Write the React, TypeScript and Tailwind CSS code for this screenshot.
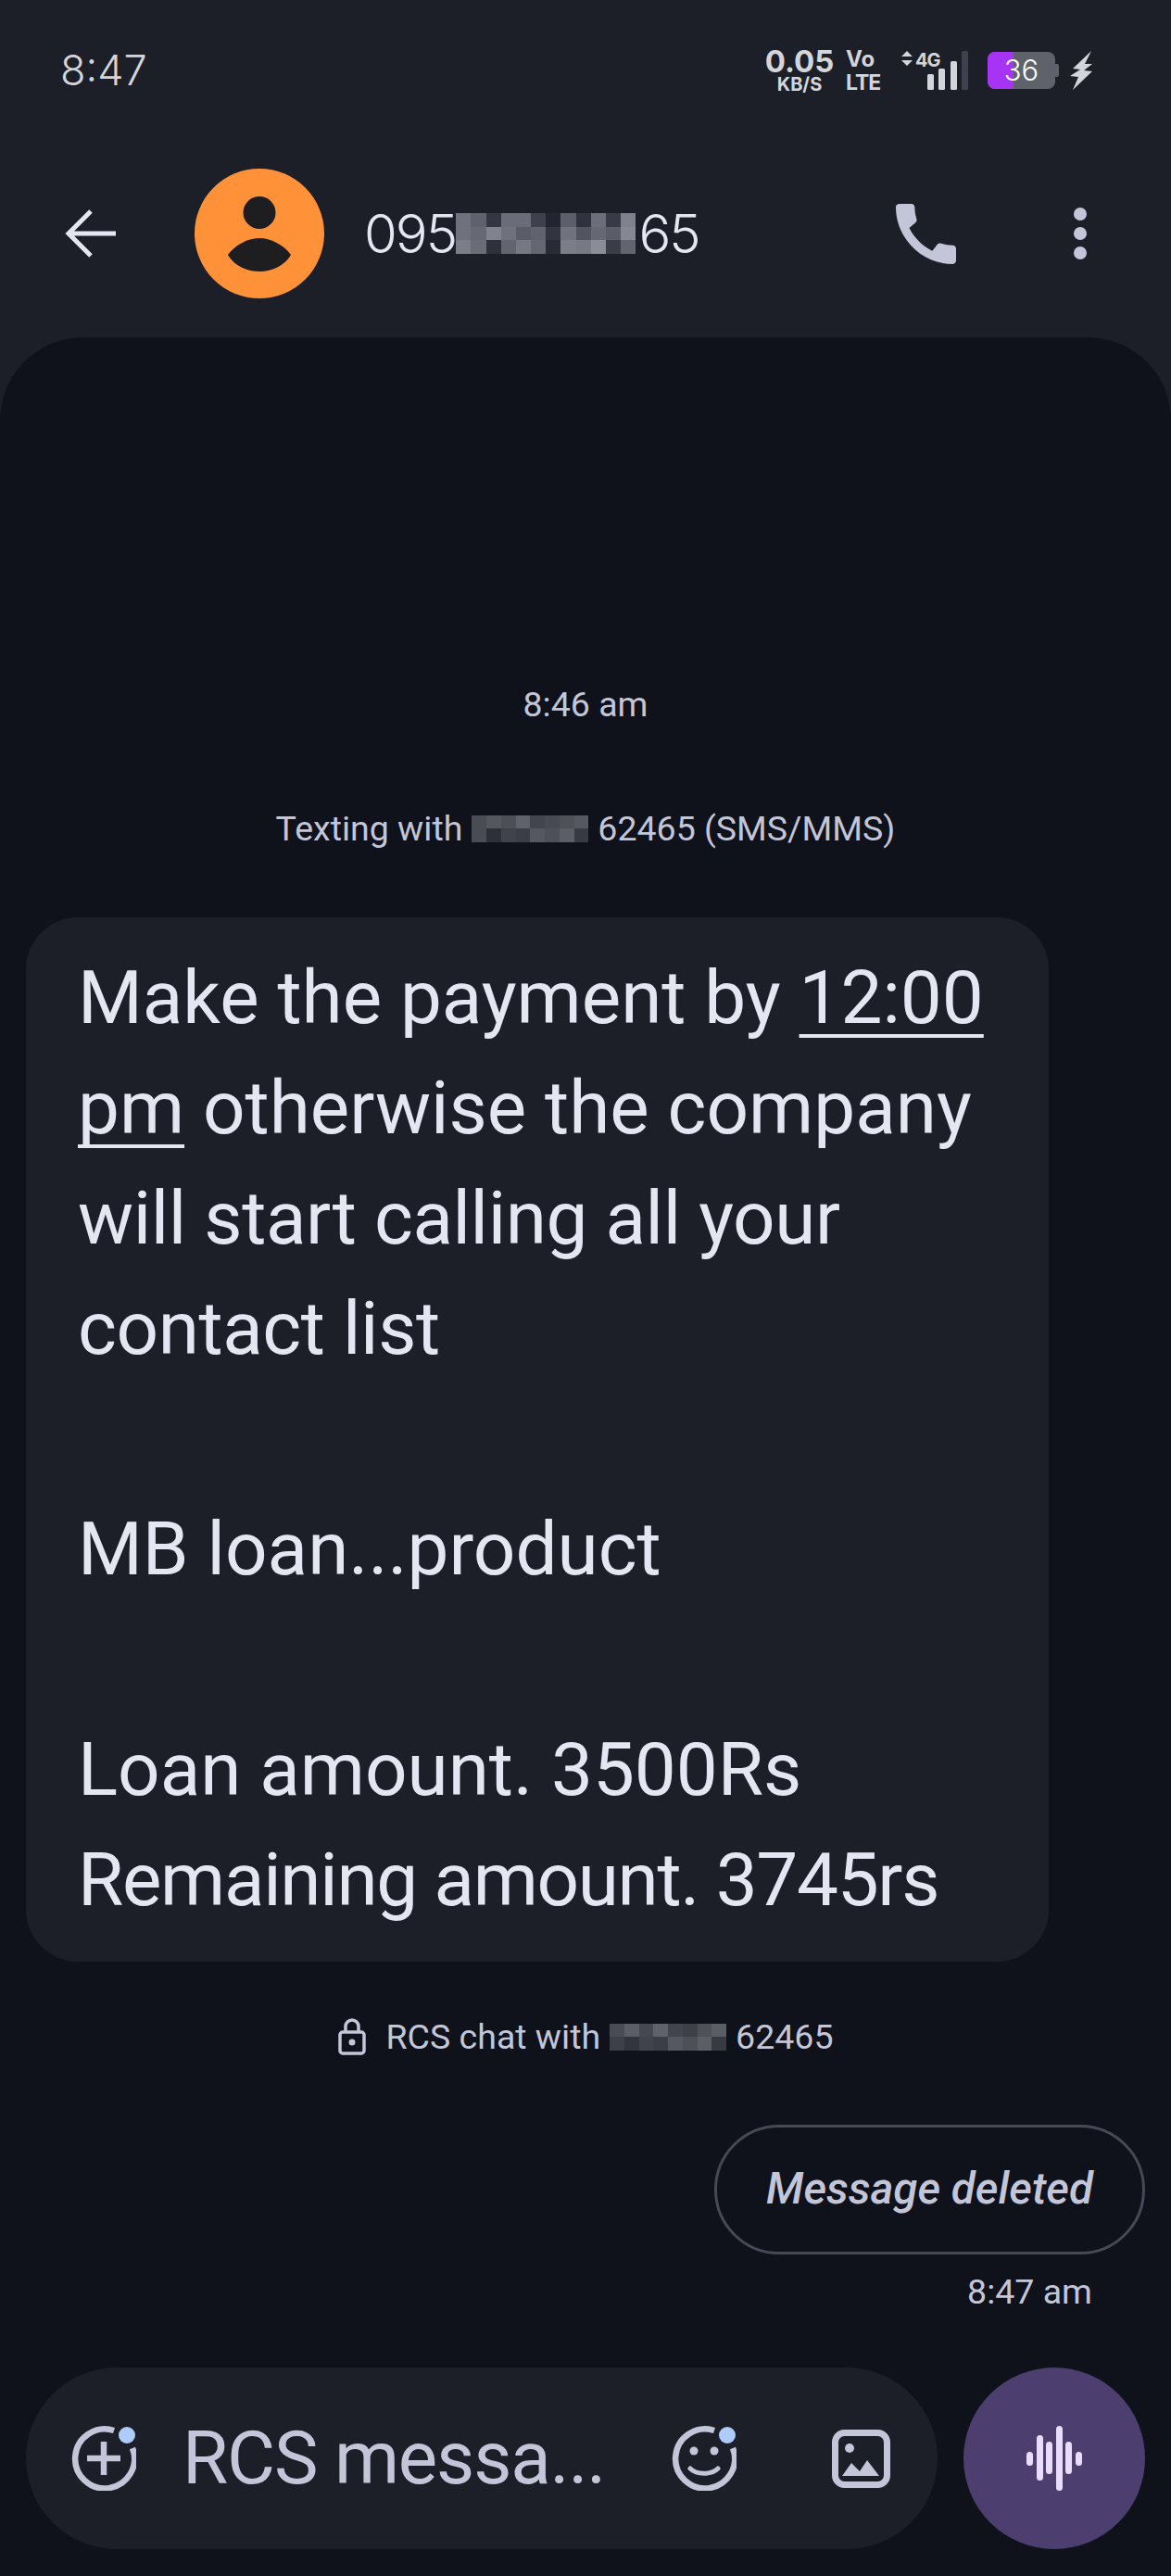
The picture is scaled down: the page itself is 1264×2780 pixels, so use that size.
import React from "react";

const nameBlocks = [
  ["#6f717c", "#5f616c", "#343641", "#6a6c77", "#6a6c77", "#3e404b", "#22242f", "#5c5e69", "#30323d", "#6c6e79", "#383a45", "#7f818c"],
  ["#6f717c", "#666873", "#80828d", "#6f717c", "#5a5c67", "#60626d", "#32343f", "#70727d", "#525460", "#666873", "#5a5c67", "#858792"],
  ["#7b7d88", "#6a6c77", "#2e303b", "#62646f", "#767883", "#646671", "#282a35", "#7b7d88", "#777984", "#8a8c96", "#3a3c47", "#62646f"],
];

const smsBlocks = [
  ["#4a4c55", "#55575f", "#4d4f58", "#60626b", "#43454e", "#484a53", "#4f5159", "#565861"],
  ["#4a4c55", "#2e3039", "#41434c", "#3c3e47", "#565861", "#4e5059", "#5c5e67", "#383a43"],
];

const rcsBlocks = [
  ["#4a4c55", "#5c5e67", "#464851", "#60626b", "#43454e", "#3e4049", "#4f5159", "#5c5e67"],
  ["#3e4049", "#33353e", "#41434c", "#3c3e47", "#565861", "#4e5059", "#5c5e67", "#383a43"],
];

function Redacted({ rows, cell, height }: { rows: string[][]; cell: number; height: number }) {
  return (
    <span className="inline-flex flex-col align-middle">
      {rows.map((row, i) => (
        <span key={i} className="flex">
          {row.map((c, j) => (
            <span key={j} style={{ background: c, width: cell, height }} />
          ))}
        </span>
      ))}
    </span>
  );
}

function StatusBar() {
  return (
    <div className="flex h-[152px] items-center justify-between pl-[65px] pr-[85px] font-['Inter',sans-serif] text-[#d3d5da]">
      <span className="text-[45px] font-light">8:47</span>
      <div className="flex items-center">
        <div className="flex w-[70px] flex-col items-center font-bold">
          <span className="text-[33px] leading-[30px]">0.05</span>
          <span className="text-[20px] leading-[20px]">KB/S</span>
        </div>
        <div className="ml-[15px] flex w-[38px] flex-col items-start font-bold">
          <span className="text-[24px] leading-[26px]">Vo</span>
          <span className="text-[23px] leading-[24px] tracking-[-1px]">LTE</span>
        </div>
        <svg width="72" height="50" viewBox="0 -8 72 50" className="ml-[22px] mt-[-8px]">
          <path d="M6 0l6 6H0zM6 16l6-6H0z" fill="#d3d5da" />
          <text x="15" y="17" fontSize="20" fontWeight="700" fill="#d3d5da" fontFamily="Inter, sans-serif" letterSpacing="-1">4G</text>
          <rect x="28" y="25" width="7" height="17" rx="1.5" fill="#d3d5da" />
          <rect x="40" y="19" width="7" height="23" rx="1.5" fill="#d3d5da" />
          <rect x="53" y="11" width="7" height="31" rx="1.5" fill="#d3d5da" />
          <rect x="65" y="0" width="7" height="42" rx="1.5" fill="#3f424c" />
        </svg>
        <div className="relative ml-[21px] flex h-[40px] w-[73px] items-center justify-center overflow-hidden rounded-[8px] bg-[#5f626a]">
          <div className="absolute inset-y-0 left-0 w-[28px] bg-[#a733f5]" />
          <span className="relative text-[31px] leading-[40px] font-light text-white">36</span>
        </div>
        <div className="h-[14px] w-[4px] rounded-r-[2px] bg-[#5f626a]" />
        <svg width="24" height="42" viewBox="0 0 24 42" className="ml-[12px]">
          <path d="M23 0 3 19l8 1L0 27l9 1-6 14 21-20-9-1 9-7-8 0z" fill="#d3d5da" />
        </svg>
      </div>
    </div>
  );
}

function Header() {
  return (
    <div className="flex h-[212px] items-start pl-[70px] pr-[91px] pt-[30px]">
      <svg width="56" height="56" viewBox="0 0 56 56" fill="none" className="mt-[42px]">
        <path d="M55 28H5M28 4 4 28l24 24" stroke="#e4e6f2" strokeWidth="5" />
      </svg>
      <div className="ml-[84px] flex h-[140px] w-[140px] items-center justify-center rounded-full bg-[#ff9238]">
        <svg width="68" height="81" viewBox="0 0 68 81" className="mt-[1px]">
          <circle cx="34" cy="17.5" r="17.5" fill="#1e1e20" />
          <path d="M0 63C8 52 22 45 34 45s26 7 34 18c-6 11-20 18-34 18S6 74 0 63z" fill="#1e1e20" />
        </svg>
      </div>
      <div className="ml-[43px] mt-[35px] flex h-[70px] items-center font-['Inter',sans-serif] text-[58px] font-light tracking-[-2px] text-[#e4e6f2]">
        <span>095</span>
        <Redacted rows={nameBlocks} cell={16.2} height={14.4} />
        <span className="ml-[3px]">65</span>
      </div>
      <svg width="65" height="65" viewBox="3 3 18 18" className="ml-auto mt-[38px]">
        <path
          d="M20.01 15.38c-1.23 0-2.42-.2-3.53-.56-.35-.12-.74-.03-1.01.24l-1.57 1.97c-2.83-1.35-5.48-3.9-6.89-6.83l1.95-1.66c.27-.28.35-.67.24-1.02-.37-1.11-.56-2.3-.56-3.53 0-.54-.45-.99-.99-.99H4.19C3.65 3 3 3.24 3 3.99 3 13.28 10.73 21 20.01 21c.71 0 .99-.63.99-1.18v-3.45c0-.54-.45-.99-.99-.99z"
          fill="#c3c6d8"
        />
      </svg>
      <div className="ml-[127px] mt-[42px] flex flex-col gap-[7px]">
        <div className="h-[14px] w-[14px] rounded-full bg-[#c3c6d8]" />
        <div className="h-[14px] w-[14px] rounded-full bg-[#c3c6d8]" />
        <div className="h-[14px] w-[14px] rounded-full bg-[#c3c6d8]" />
      </div>
    </div>
  );
}

function Bubble() {
  return (
    <div className="ml-[28px] h-[1127px] w-[1104px] rounded-[56px] bg-[#1c1f28] pl-[56px] pt-[28px] text-[80px] leading-[119px] text-[#e4e6f2]">
      <div>
        Make the payment by{" "}
        <span className="underline decoration-[4px] underline-offset-[12px] [text-decoration-skip-ink:none]">12:00</span>
      </div>
      <div>
        <span className="underline decoration-[4px] underline-offset-[12px] [text-decoration-skip-ink:none]">pm</span> otherwise the company
      </div>
      <div className="tracking-[-0.4px]">will start calling all your</div>
      <div className="tracking-[-0.4px]">contact list</div>
      <div>&nbsp;</div>
      <div>MB loan...product</div>
      <div>&nbsp;</div>
      <div>Loan amount. 3500Rs</div>
      <div className="tracking-[-1.3px]">Remaining amount. 3745rs</div>
    </div>
  );
}

function Composer() {
  return (
    <div className="flex items-center justify-between px-[28px]">
      <div className="flex h-[196px] w-[984px] items-center rounded-full bg-[#1c1f28] pl-[49px] pr-[51px]">
        <svg width="70" height="70" viewBox="0 0 70 70" fill="none" className="shrink-0">
          <path d="M46 5A32 32 0 1 0 66 24" stroke="#c3c6d8" strokeWidth="6.5" />
          <path d="M35 17v36M17 35h36" stroke="#c3c6d8" strokeWidth="6.5" />
          <circle cx="60" cy="10" r="9" fill="#aecbfa" />
        </svg>
        <span className="ml-[50px] w-[460px] shrink-0 whitespace-nowrap text-[80px] tracking-[-1.2px] text-[#c3c6d8]">RCS messa...</span>
        <svg width="70" height="70" viewBox="0 0 70 70" fill="none" className="ml-[68px] shrink-0">
          <path d="M46 5A32 32 0 1 0 66 24" stroke="#c3c6d8" strokeWidth="6.5" />
          <circle cx="24" cy="27" r="4.5" fill="#c3c6d8" />
          <circle cx="46" cy="27" r="4.5" fill="#c3c6d8" />
          <path d="M20 46c7 7 23 7 30 0" stroke="#c3c6d8" strokeWidth="5" strokeLinecap="round" />
          <circle cx="60" cy="10" r="9" fill="#aecbfa" />
        </svg>
        <svg width="63" height="63" viewBox="0 0 63 63" fill="none" className="ml-auto shrink-0">
          <rect x="3.5" y="3.5" width="56" height="56" rx="10" stroke="#c3c6d8" strokeWidth="7" />
          <circle cx="19" cy="20" r="5" fill="#c3c6d8" />
          <path d="M11 50l10-14 9 9 8-12 13 17z" fill="#c3c6d8" />
        </svg>
      </div>
      <div className="flex h-[196px] w-[196px] items-center justify-center rounded-full bg-[#4c3f6f]">
        <svg width="60" height="70" viewBox="0 0 60 70" fill="#e8ddff">
          <rect x="0" y="28" width="7" height="15" rx="3.5" />
          <rect x="11" y="10" width="7" height="49" rx="3.5" />
          <rect x="21" y="17" width="7" height="35" rx="3.5" />
          <rect x="32" y="0" width="7" height="70" rx="3.5" />
          <rect x="42" y="17" width="7" height="35" rx="3.5" />
          <rect x="53" y="28" width="7" height="15" rx="3.5" />
        </svg>
      </div>
    </div>
  );
}

export default function App() {
  return (
    <div className="flex h-[2780px] w-[1264px] flex-col overflow-hidden bg-[#1c1f28] font-['Roboto','Liberation_Sans',sans-serif]">
      <StatusBar />
      <Header />
      <div className="flex flex-1 flex-col rounded-t-[90px] bg-[#0f121a]">
        <div className="mt-[374px] text-center text-[37.5px] leading-[44px] text-[#c3c6d8]">8:46 am</div>
        <div className="mt-[90px] flex h-[44px] items-center justify-center gap-[10px] text-[37.5px] text-[#c3c6d8]">
          <span>Texting with</span>
          <Redacted rows={smsBlocks} cell={15.75} height={14.5} />
          <span>62465 (SMS/MMS)</span>
        </div>
        <div className="mt-[74px]">
          <Bubble />
        </div>
        <div className="mt-[56px] flex h-[50px] items-center justify-center gap-[10px] text-[37.5px] text-[#c3c6d8]">
          <svg width="30" height="40" viewBox="0 0 30 40" fill="none" className="mr-[12px]">
            <rect x="2" y="15" width="26" height="23" rx="3" stroke="#c3c6d8" strokeWidth="3.5" />
            <path d="M8 15V9a7 7 0 0 1 14 0v6" stroke="#c3c6d8" strokeWidth="3.5" />
            <circle cx="15" cy="26" r="3.5" fill="#c3c6d8" />
          </svg>
          <span>RCS chat with</span>
          <Redacted rows={rcsBlocks} cell={15.75} height={14.5} />
          <span>62465</span>
        </div>
        <div className="mr-[28px] mt-[70px] flex h-[140px] w-[465px] items-center justify-center self-end rounded-full border-[3px] border-[#474a56] text-[47.5px] font-medium text-[#c3c6d8] italic">
          Message deleted
        </div>
        <div className="mr-[85px] mt-[18px] self-end text-[37.5px] leading-[44px] text-[#c3c6d8]">8:47 am</div>
        <div className="mt-[60px]">
          <Composer />
        </div>
      </div>
    </div>
  );
}
